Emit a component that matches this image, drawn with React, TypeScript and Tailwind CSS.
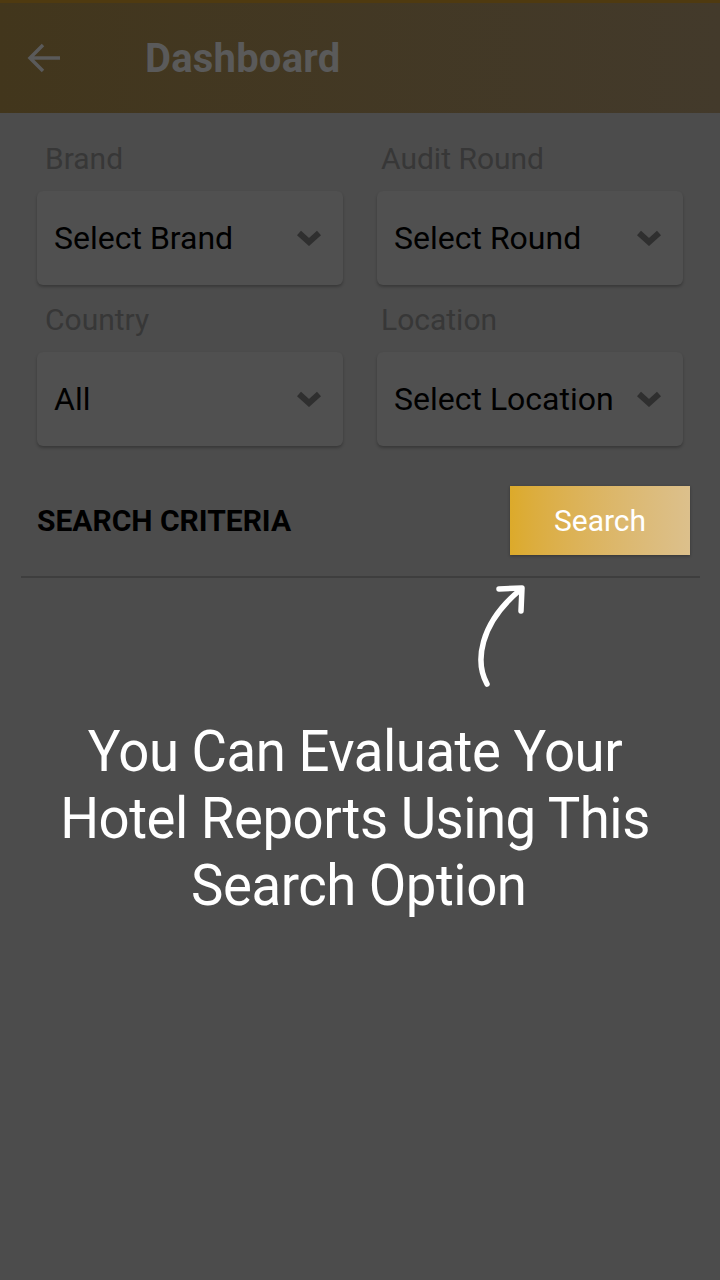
import React from "react";

function Chevron() {
  return (
    <svg width="24" height="16" viewBox="0 0 24 16" className="shrink-0">
      <path d="M2 3 L12 12 L22 3" fill="none" stroke="#2f2f2f" strokeWidth="6" strokeLinejoin="miter" />
    </svg>
  );
}

function Field({ label, value, right }: { label: string; value: string; right?: boolean }) {
  return (
    <div className="flex flex-col">
      <div className={"text-[30px] leading-none text-[#373737] h-[33px] " + (right ? "pl-[4px]" : "pl-[8px]")}>{label}</div>
      <div className="mt-[14px] h-[94px] rounded-[6px] bg-[#505050] shadow-[0_2px_3px_rgba(0,0,0,0.25)] flex items-center justify-between pl-[17px] pr-[22px]">
        <span className="text-[32px] text-black leading-none">{value}</span>
        <Chevron />
      </div>
    </div>
  );
}

export default function App() {
  return (
    <div className="w-[720px] h-[1280px] bg-[#4c4c4c] flex flex-col overflow-hidden" style={{ fontFamily: "Roboto, 'Noto Sans', sans-serif" }}>
      <div className="h-[113px] bg-gradient-to-r from-[#42361c] to-[#433a2b] border-t-[3px] border-[#4f3a10] flex items-center">
        <svg width="36" height="32" viewBox="0 0 36 32" className="ml-[26px]">
          <path d="M34 16 H4 M17 3 L4 16 L17 29" fill="none" stroke="#5a5a5a" strokeWidth="3.5" />
        </svg>
        <span className="ml-[83px] text-[40px] font-bold text-[#5a5a5a] tracking-[0.2px] mt-[2px]">Dashboard</span>
      </div>
      <div className="grid grid-cols-2 gap-x-[34px] gap-y-[20px] px-[37px] pt-[31px]">
        <Field label="Brand" value="Select Brand" />
        <Field label="Audit Round" value="Select Round" right />
        <Field label="Country" value="All" />
        <Field label="Location" value="Select Location" right />
      </div>
      <div className="mt-[40px] flex items-center justify-between pl-[37px] pr-[30px]">
        <span className="text-[30px] font-bold text-black">SEARCH CRITERIA</span>
        <div className="w-[180px] h-[69px] bg-gradient-to-r from-[#dcaa2a] to-[#dcc08c] flex items-center justify-center text-white text-[30px] shadow-[0_1px_3px_rgba(0,0,0,0.3)]">
          Search
        </div>
      </div>
      <div className="mt-[21px] ml-[21px] mr-[20px] h-[2px] bg-[#3e3e3e]" />
      <div className="relative h-[140px]">
        <svg width="80" height="120" viewBox="0 0 80 120" className="absolute left-[465px] top-[6px]">
          <path d="M22 100 C10 78 14 40 55 6" fill="none" stroke="white" strokeWidth="5.5" strokeLinecap="round" />
          <path d="M34 5 L57 4 L56 27" fill="none" stroke="white" strokeWidth="5.5" strokeLinecap="round" strokeLinejoin="round" />
        </svg>
      </div>
      <div className="pr-[10px] mt-[0px]">
        <div className="text-white text-center text-[58px] leading-[67px] tracking-[-0.5px] scale-x-[0.94] origin-center whitespace-nowrap flex flex-col items-center">
          <span>You Can Evaluate Your</span>
          <span>Hotel Reports Using This</span>
          <span className="pl-[8px]">Search Option</span>
        </div>
      </div>
    </div>
  );
}
